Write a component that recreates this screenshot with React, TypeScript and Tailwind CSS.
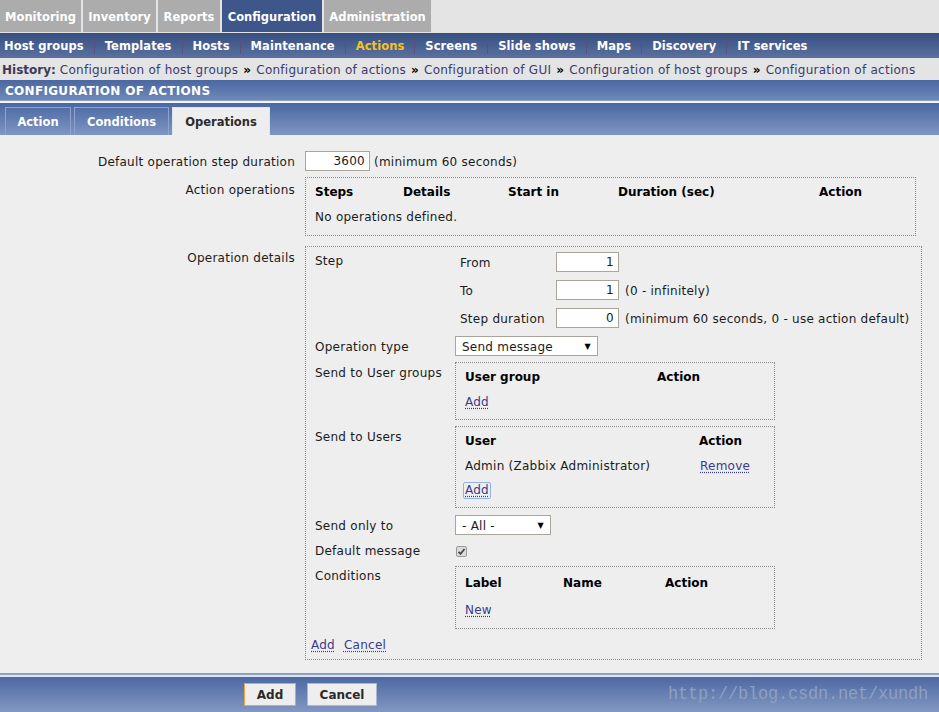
import clsx from 'clsx';

const mainTabs = [
  { label: 'Monitoring', w: 'w-[81px]' },
  { label: 'Inventory', w: 'w-[73px]' },
  { label: 'Reports', w: 'w-[62px]' },
  { label: 'Configuration', w: 'w-[100px]', active: true },
  { label: 'Administration', w: 'w-[107px]' },
];

const subMenu = ['Host groups', 'Templates', 'Hosts', 'Maintenance', 'Actions', 'Screens', 'Slide shows', 'Maps', 'Discovery', 'IT services'];

const history = ['Configuration of host groups', 'Configuration of actions', 'Configuration of GUI', 'Configuration of host groups', 'Configuration of actions'];

function Link({ children, className }: { children: React.ReactNode; className?: string }) {
  return (
    <span className={clsx('text-[#3b3b8c] underline decoration-dotted decoration-[#3b3b8c] underline-offset-[2px]', className)}>
      {children}
    </span>
  );
}

function NumInput({ value, w = 'w-[63px]' }: { value: string; w?: string }) {
  return (
    <div className={clsx('h-[20px] border border-[#aaa59a] bg-white text-right pr-[4px] pt-[1px] leading-[17px] shrink-0', w)}>
      {value}
    </div>
  );
}

function Select({ value, w }: { value: string; w: string }) {
  return (
    <div className={clsx('h-[20px] border border-[#aaa59a] bg-white flex items-center pl-[6px] pr-[6px] shrink-0', w)}>
      <span className="flex-1 leading-[18px] h-[18px] pt-[1px] overflow-hidden">{value}</span>
      <span className="text-[8px] text-black">▼</span>
    </div>
  );
}

export default function App() {
  return (
    <div className="w-[939px] h-[712px] overflow-hidden flex flex-col bg-[#eeeeee] font-['DejaVu_Sans',sans-serif] text-[12px] leading-[15px] tracking-[0.25px] text-[#1b1b1b]">
      {/* main menu */}
      <div className="h-[33px] shrink-0 flex gap-[2px] bg-[#e4e4e4]">
        {mainTabs.map((t) => (
          <div
            key={t.label}
            className={clsx(
              'h-[32px] pt-[2px] flex items-center justify-center font-bold text-[11.5px] tracking-normal text-white',
              t.w,
              t.active ? 'bg-[#3e5689]' : 'bg-[#acacac]'
            )}
          >
            {t.label}
          </div>
        ))}
      </div>

      {/* sub menu */}
      <div className="h-[25px] shrink-0 flex items-center pl-[4px] pt-[1px] bg-gradient-to-b from-[#374f80] to-[#5a71a0] font-bold text-[11.5px] tracking-[0.07px]">
        {subMenu.map((s, i) => (
          <div key={s} className="flex items-center">
            {i > 0 && <span className="w-px h-[16px] bg-[#5b4f7c] mx-[10px]" />}
            <span className={s === 'Actions' ? 'text-[#f6c31c]' : 'text-white'}>{s}</span>
          </div>
        ))}
      </div>

      {/* history */}
      <div className="h-[22px] shrink-0 flex items-center pl-[2px] pt-[2px] bg-[#e4e4e4] text-[#3a3a72] whitespace-nowrap">
        <span className="font-bold text-[#3b3b58] tracking-normal mr-[4px]">History:</span>
        {history.map((h, i) => (
          <span key={i} className="flex items-center">
            {i > 0 && <span className="font-bold text-black mx-[5px]">»</span>}
            <span>{h}</span>
          </span>
        ))}
      </div>

      {/* page header */}
      <div className="h-[20px] shrink-0 flex items-center pl-[5px] pt-[2px] bg-gradient-to-b from-[#4b67a1] to-[#6e88b8] text-white font-bold tracking-[0.3px]">
        CONFIGURATION OF ACTIONS
      </div>
      <div className="h-[1px] shrink-0 bg-[#8aa1c8]" />
      <div className="h-[2px] shrink-0 bg-[#f3f5f9]" />

      {/* form tabs */}
      <div className="h-[32px] shrink-0 flex items-end gap-[3px] pl-[5px] bg-gradient-to-b from-[#4a67a2] to-[#7e96c2] font-bold text-[11.5px] tracking-normal">
        <div className="w-[66px] h-[28px] pt-[1px] flex items-center justify-center border border-b-0 border-[#8ea4cc] text-white">Action</div>
        <div className="w-[95px] h-[28px] pt-[1px] flex items-center justify-center border border-b-0 border-[#8ea4cc] text-white">Conditions</div>
        <div className="w-[98px] h-[28px] pt-[1px] flex items-center justify-center border border-b-0 border-[#dfe5ef] bg-[#eeeeee] text-[#2c2c2c]">Operations</div>
      </div>

      {/* form */}
      <div className="flex-1 pt-[16px]">
        <div className="flex items-center">
          <div className="w-[295px] text-right pt-[2px]">Default operation step duration</div>
          <div className="pl-[10px] flex items-center gap-[4px]">
            <NumInput value="3600" w="w-[65px]" />
            <span className="pt-[2px]">(minimum 60 seconds)</span>
          </div>
        </div>

        <div className="flex mt-[6px]">
          <div className="w-[295px] text-right pt-[6px]">Action operations</div>
          <div className="ml-[10px] w-[611px] h-[59px] border border-dotted border-[#8a8a8a] pl-[9px] pt-[7px]">
            <div className="grid grid-cols-[88px_105px_110px_201px_1fr] font-bold tracking-normal text-black">
              <span>Steps</span>
              <span>Details</span>
              <span>Start in</span>
              <span>Duration (sec)</span>
              <span>Action</span>
            </div>
            <div className="mt-[10px]">No operations defined.</div>
          </div>
        </div>

        <div className="flex mt-[10px]">
          <div className="w-[295px] text-right pt-[5px]">Operation details</div>
          <div className="ml-[10px] w-[617px] border border-dotted border-[#8a8a8a] pt-[5px] pb-[6px]">
            <div className="grid grid-cols-[140px_1fr] pl-[9px]">
              {/* step */}
              <div className="pt-[2px]">Step</div>
              <div className="pl-[5px] flex flex-col gap-[8px]">
                <div className="flex items-center">
                  <span className="w-[96px] pt-[2px]">From</span>
                  <NumInput value="1" />
                </div>
                <div className="flex items-center">
                  <span className="w-[96px] pt-[2px]">To</span>
                  <NumInput value="1" />
                  <span className="ml-[6px] pt-[2px]">(0 - infinitely)</span>
                </div>
                <div className="flex items-center">
                  <span className="w-[96px] pt-[2px]">Step duration</span>
                  <NumInput value="0" />
                  <span className="ml-[6px] pt-[2px]">(minimum 60 seconds, 0 - use action default)</span>
                </div>
              </div>

              {/* operation type */}
              <div className="mt-[8px] pt-[2px] flex items-center">Operation type</div>
              <div className="mt-[8px] flex">
                <Select value="Send message" w="w-[143px]" />
              </div>

              {/* user groups */}
              <div className="mt-[6px] pt-[4px]">Send to User groups</div>
              <div className="mt-[6px] w-[320px] h-[58px] border border-dotted border-[#8a8a8a] pl-[9px] pt-[7px]">
                <div className="grid grid-cols-[192px_1fr] font-bold tracking-normal text-black">
                  <span>User group</span>
                  <span>Action</span>
                </div>
                <div className="mt-[10px]"><Link>Add</Link></div>
              </div>

              {/* users */}
              <div className="mt-[6px] pt-[4px]">Send to Users</div>
              <div className="mt-[6px] w-[320px] h-[82px] border border-dotted border-[#8a8a8a] pl-[9px] pt-[7px]">
                <div className="grid grid-cols-[234px_1fr] font-bold tracking-normal text-black">
                  <span>User</span>
                  <span>Action</span>
                </div>
                <div className="grid grid-cols-[235px_1fr] mt-[10px]">
                  <span>Admin (Zabbix Administrator)</span>
                  <span><Link>Remove</Link></span>
                </div>
                <div className="mt-[8px] flex">
                  <span className="-ml-[2px] px-[1px] border border-[#8fb4ec] rounded-[2px] leading-[15px]">
                    <Link className="no-underline">Add</Link>
                  </span>
                </div>
              </div>

              {/* send only to */}
              <div className="mt-[7px] pt-[2px] flex items-center">Send only to</div>
              <div className="mt-[7px] flex">
                <Select value="- All -" w="w-[96px]" />
              </div>

              {/* default message */}
              <div className="mt-[8px] pt-[1px]">Default message</div>
              <div className="mt-[8px] ml-[1px] flex items-center h-[16px]">
                <span className="w-[11px] h-[11px] border border-[#9a9a9a] rounded-[2px] bg-[#dcdcdc] flex items-center justify-center">
                  <svg width="9" height="9" viewBox="0 0 9 9">
                    <path d="M1.5 4.8 L3.5 6.8 L7.5 2" fill="none" stroke="#4a4a4a" strokeWidth="1.8" />
                  </svg>
                </span>
              </div>

              {/* conditions */}
              <div className="mt-[7px] pt-[3px]">Conditions</div>
              <div className="mt-[7px] w-[320px] h-[63px] border border-dotted border-[#8a8a8a] pl-[9px] pt-[9px]">
                <div className="grid grid-cols-[98px_102px_1fr] font-bold tracking-normal text-black">
                  <span>Label</span>
                  <span>Name</span>
                  <span>Action</span>
                </div>
                <div className="mt-[12px]"><Link>New</Link></div>
              </div>
            </div>

            <div className="mt-[9px] pl-[5px] flex gap-[9px]">
              <Link>Add</Link>
              <Link>Cancel</Link>
            </div>
          </div>
        </div>
      </div>

      {/* footer */}
      <div className="h-[2px] shrink-0 bg-[#8aa2c6]" />
      <div className="h-[2px] shrink-0 bg-[#dde4ee]" />
      <div className="h-[35px] shrink-0 flex items-center pl-[244px] pr-[11px] bg-gradient-to-b from-[#4d69a3] to-[#8298c2]">
        <button className="w-[52px] h-[23px] pt-[1px] border border-[#f0a43a] bg-[#eeeeee] font-bold tracking-normal text-[#2a2a2a]">Add</button>
        <button className="ml-[11px] w-[70px] h-[23px] pt-[1px] border border-[#a8b8d2] bg-[#eeeeee] font-bold tracking-normal text-[#2a2a2a]">Cancel</button>
        <span className="ml-auto font-['Liberation_Mono',monospace] text-[17px] tracking-[-0.2px] text-[#8ea0c0] scale-y-110">http://blog.csdn.net/xundh</span>
      </div>
    </div>
  );
}
